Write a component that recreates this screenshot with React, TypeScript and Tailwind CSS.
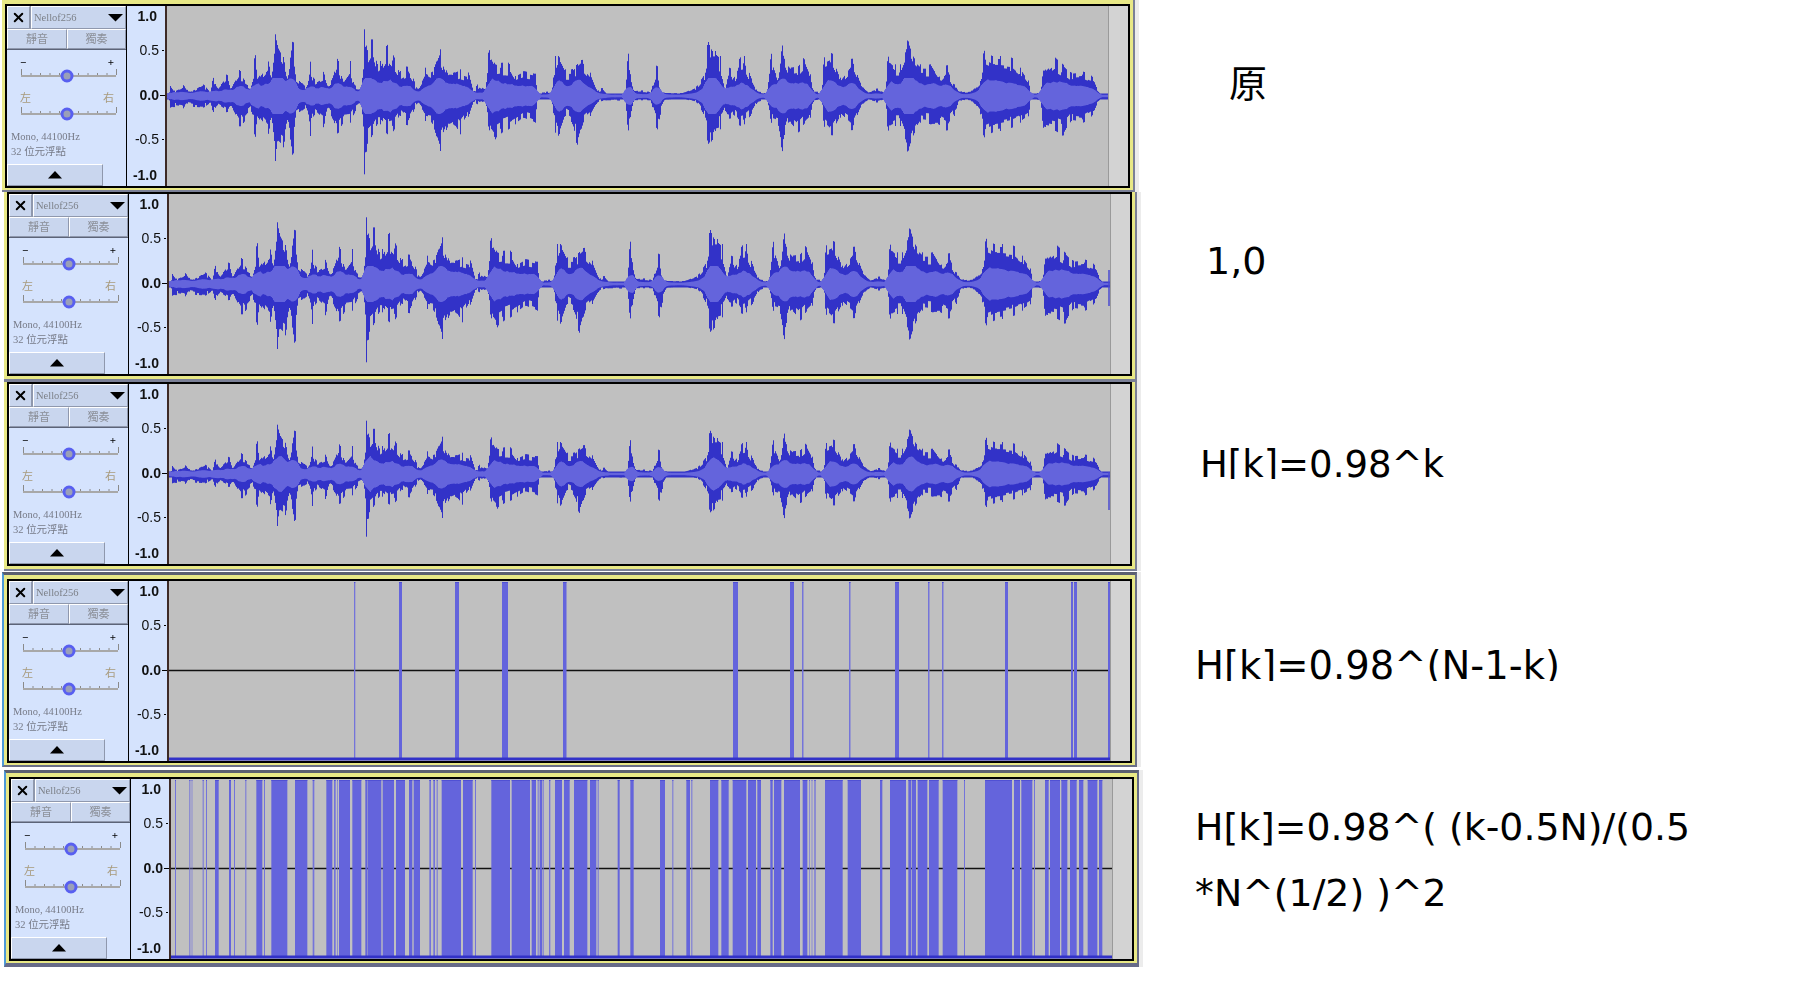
import type { ReactNode } from "react"
import { X } from "lucide-react"

// envelope read off the clip: [x in crop, top y, bottom y], crop centre line is y=285 at 3x
const leftPeaks = [
  [22,285,285],[30,255,320],[40,270,318],[70,252,322],[75,262,310],[100,268,318],[130,250,320],[150,275,305],[158,228,335],[170,262,312],
  [200,218,335],[210,262,315],[238,205,378],[250,235,365],[275,255,330],[284,148,420],[290,235,345],[325,180,400],[332,240,340],[345,100,480],
  [350,130,420],[370,170,440],[380,240,350],[398,108,475],[405,220,350],[440,260,320],[450,182,405],[460,235,340],[490,212,380],[500,255,320],
  [515,235,350],[532,170,400],[545,235,370],[570,180,365],[580,250,340],[605,255,310],[612,85,520],[620,150,430],[635,110,405],[650,190,370],
  [660,180,370],[680,130,400],[700,165,390],[720,210,345],[740,195,375],[760,235,330],[770,265,305],[795,200,360],[815,215,365],[840,145,450],
  [860,215,380],[880,215,370],[900,205,400],[925,215,345],[940,275,300],[950,250,310],[975,265,300],[985,143,385],[1005,190,415],[1025,185,395],
  [1045,185,385],[1065,225,370],[1090,210,350],[1125,218,365],[1130,275,298],[1160,272,295],[1175,270,300],[1185,165,395],[1195,165,405],[1215,205,345],
  [1235,205,365],[1250,190,435],[1265,175,375],[1290,215,345],[1310,270,305],[1325,260,300],[1340,280,298],[1395,278,300],[1403,148,395],[1412,240,335],
  [1420,270,298],[1445,268,298],[1465,272,298],
]
const rightPeaks = [
  [0,275,298],[20,185,390],[28,270,350],[40,275,298],[100,275,295],[140,255,305],[165,215,350],[172,118,430],[185,150,420],[195,150,390],
  [210,165,385],[225,265,330],[238,195,355],[250,235,340],[268,170,375],[282,165,370],[300,225,345],[320,270,305],[350,275,295],[362,155,365],
  [385,235,375],[395,130,455],[415,200,360],[445,195,395],[460,170,370],[480,220,350],[490,272,298],[515,272,295],[520,170,375],[545,155,405],
  [570,230,350],[605,170,390],[630,245,320],[650,272,298],[680,262,305],[705,275,295],[712,165,390],[735,190,375],[750,190,375],[772,115,455],
  [790,170,400],[810,190,365],[840,190,370],[865,230,370],[890,190,390],[912,250,345],[925,272,298],[970,265,305],[990,240,340],[1000,148,410],
  [1025,165,395],[1050,165,390],[1085,170,380],[1110,200,365],[1135,240,345],[1140,275,298],[1170,275,298],[1178,210,380],[1215,170,390],[1238,190,405],
  [1262,215,360],[1300,212,365],[1325,225,345],[1345,275,298],[1375,282,290],
]

const peaks = [
  ...leftPeaks.map(([x, t, b]) => [x / 3 - 7, (285 - t) / 3, (b - 285) / 3]),
  ...rightPeaks.map(([x, t, b]) => [x / 3 + 483, (285 - t) / 3, (b - 285) / 3]),
]

const jitter = (i: number) => {
  const v = Math.sin(i * 12.9898) * 43758.5453
  return v - Math.floor(v)
}

function envelope() {
  const out: number[][] = []
  let k = 0
  for (let x = 0; x < 941; x++) {
    while (k < peaks.length - 2 && peaks[k + 1][0] <= x) k++
    const [x0, u0, d0] = peaks[k]
    const [x1, u1, d1] = peaks[k + 1]
    const t = Math.min(1, Math.max(0, (x - x0) / (x1 - x0 || 1)))
    // steps a few pixels wide, the clip is blocky rather than fuzzy
    const f = 0.6 + 0.4 * jitter(Math.floor(x / 3))
    const near = Math.abs(x - x0) < 1 || Math.abs(x - x1) < 1 ? 1 : f
    out.push([(u0 + (u1 - u0) * t) * near, (d0 + (d1 - d0) * t) * near])
  }
  return out
}

const env = envelope()

function wavePaths(scale: number) {
  let dark = ""
  let light = ""
  env.forEach(([u, d], x) => {
    const c = 90
    dark += `M${x + 0.5} ${(c - Math.max(u * scale, 2.5)).toFixed(1)}V${(c + Math.max(d * scale, 3.5)).toFixed(1)}`
    let sum = 0
    let n = 0
    for (let j = Math.max(0, x - 4); j <= Math.min(940, x + 4); j++) {
      sum += env[j][0] + env[j][1]
      n++
    }
    const r = Math.max(1.2, Math.min(18, (sum / n) * 0.24 * scale))
    light += `M${x + 0.5} ${(c - r).toFixed(1)}V${(c + r).toFixed(1)}`
  })
  return { dark, light }
}

function Wave({ scale, tail }: { scale: number; tail?: [number, number] }) {
  const { dark, light } = wavePaths(scale)
  return (
    <svg width="941" height="180" className="block">
      <path d={dark} stroke="#3232c8" fill="none" />
      <path d={light} stroke="#6464dc" fill="none" />
      {tail && <line x1="940" x2="940" y1={tail[0]} y2={tail[1]} stroke="#4a4ad0" strokeWidth="1.5" />}
    </svg>
  )
}

const sparse: [number, number][] = [
  [185, 1.3], [230, 3], [286, 4], [333, 6], [394, 3.5], [564, 5], [621, 4], [633, 1.5], [680, 1.5], [726, 4], [759, 1.5], [773, 1.5], [836, 3], [902, 2], [905, 3], [939, 2],
]

const denseLeft = [
  [45,48],[88,91],[95,97],[128,131],[138,141],[165,176],[207,213],[222,225],[256,259],[289,307],[312,315],[334,382],[405,442],[458,463],[499,517],[522,527],[531,533],[537,570],[577,604],[616,622],[623,664],[668,702],[708,735],[747,757],[761,780],[808,813],[820,825],[830,833],[845,903],[909,938],[945,948],[994,1050],[1055,1110],[1115,1128],[1133,1136],[1139,1147],[1150,1152],[1167,1171],[1185,1206],[1212,1229],[1242,1282],[1290,1309],[1313,1316],[1373,1379],[1411,1421],
]
const denseRight = [
  [30,45],[67,70],[109,120],[124,127],[180,205],[214,236],[248,289],[294,318],[322,333],[361,368],[372,394],[402,450],[458,472],[478,480],[485,487],[493,497],[525,578],[593,633],[690,697],[720,768],[775,783],[785,798],[803,832],[837,866],[878,922],[942,945],[1005,1086],[1092,1110],[1114,1147],[1152,1155],[1185,1196],[1200,1230],[1234,1252],[1260,1280],[1287,1300],[1313,1342],[1347,1357],
]
const dense: [number, number][] = [
  ...denseLeft.map(([a, b]) => [a / 3 - 11, (b - a) / 3] as [number, number]),
  ...denseRight.map(([a, b]) => [a / 3 + 479, (b - a) / 3] as [number, number]),
]

function Bars({ bars }: { bars: [number, number][] }) {
  return (
    <svg width="941" height="180" className="block">
      <line x1="0" x2="941" y1="89.5" y2="89.5" stroke="#111" strokeWidth="1.5" />
      {bars.map(([x, w], i) => (
        <g key={i}>
          <rect x={x} y="1" width={w} height="176" fill={w < 2 ? "#7474da" : "#6464dc"} />
          <rect x={x} y="1" width={w} height="1" fill="#5050d4" />
        </g>
      ))}
      <rect x="0" y="176.5" width="941" height="3" fill="#3232c8" />
    </svg>
  )
}

function Slider({ left, right, accent }: { left: string; right: string; accent?: boolean }) {
  return (
    <div>
      <div className={`flex justify-between pl-[13px] pr-[12px] h-[12px] text-[11px] ${accent ? "leading-[10px] text-[#a89a7c]" : "leading-[14px] text-black font-bold"}`}>
        <span>{left}</span>
        <span>{right}</span>
      </div>
      <svg width="119" height="17" className="block">
        <path d="M14.5 2V8M24 6V8M33.5 6V8M43 6V8M52.5 6V8M62 6V8M71.5 6V8M81 6V8M90.5 6V8M100 6V8M109.5 2V8" stroke="#8a8a8a" />
        <line x1="14" x2="109" y1="9" y2="9" stroke="#a8a8a8" strokeWidth="2" />
        <circle cx="60" cy="9" r="5" fill="#9a9fb8" stroke="#585ff0" strokeWidth="3" />
      </svg>
    </div>
  )
}

function Panel() {
  const btn = "flex items-center bg-[#c9d6ee] border-t border-l border-t-white border-l-white border-r border-b border-r-[#8f98ad] border-b-[#8f98ad]"
  return (
    <div className="w-[119px] h-[180px] shrink-0 bg-[#d5e3fd] flex flex-col font-['Liberation_Serif','Noto_Sans_CJK_TC',serif]">
      <div className="flex h-[23px] gap-[1px] bg-[#8f98ad]">
        <div className={`${btn} w-[23px] justify-center`}>
          <X size={15} strokeWidth={3.2} className="text-black" />
        </div>
        <div className={`${btn} flex-1 pl-[2px] justify-between pr-[2px] text-[10.5px] text-[#7c8088]`}>
          <span>Nellof256</span>
          <svg width="15" height="8"><polygon points="0,0 15,0 7.5,7.5" fill="#000" /></svg>
        </div>
      </div>
      <div className="flex h-[21px] border-b border-[#5c6478] text-[11px] text-[#8b8f98]">
        <div className={`${btn} w-[60px] justify-center`}>靜音</div>
        <div className={`${btn} flex-1 justify-center`}>獨奏</div>
      </div>
      <div className="mt-[5px]">
        <Slider left="−" right="+" />
      </div>
      <div className="mt-[9px]">
        <Slider left="左" right="右" accent />
      </div>
      <div className="mt-[7px] pl-[4px] text-[10.5px] leading-[15px] text-[#777b88]">
        <div>Mono, 44100Hz</div>
        <div>32 位元浮點</div>
      </div>
      <div className={`${btn} w-[96px] h-[22px] mt-auto justify-center`}>
        <svg width="14" height="8"><polygon points="7,0 14,7.5 0,7.5" fill="#000" /></svg>
      </div>
    </div>
  )
}

function Ruler() {
  const line = "flex items-center h-[18px]"
  return (
    <div className="w-[39px] shrink-0 h-[180px] bg-[#d5e3fd] border-l border-black flex flex-col items-end font-['Liberation_Sans',sans-serif] text-[14px] text-[#111]">
      <div className={`${line} mt-[1px] mr-[8px] font-bold`}>1.0</div>
      <div className={`${line} mt-[16px] mr-[1px]`}>0.5<span className="ml-[3px] w-[2px] h-[1px] bg-black" /></div>
      <div className={`${line} mt-[27px] font-bold`}>0.0<span className="ml-[1px] w-[5px] h-[1px] bg-black" /></div>
      <div className={`${line} mt-[26px] mr-[1px]`}>-0.5<span className="ml-[3px] w-[2px] h-[1px] bg-black" /></div>
      <div className={`${line} mt-[18px] mr-[8px] font-bold`}>-1.0</div>
    </div>
  )
}

function Track({ frame, children }: { frame: string; children: ReactNode }) {
  return (
    <div className={`shrink-0 bg-[#e8e886] shadow-[4px_0_0_#ececec] ${frame}`}>
      <div className="border-2 border-black flex w-[1125px] h-[184px] blur-[0.3px]">
        <Panel />
        <Ruler />
        <div className="w-[2px] shrink-0 bg-[#3d2a26]" />
        <div className="w-[941px] h-[180px] shrink-0 bg-[#c0c0c0]">{children}</div>
        <div className="flex-1 bg-[#d3d3d3] border-l border-[#9a9a9a]" />
      </div>
    </div>
  )
}

const label = "font-['DejaVu_Sans','Noto_Sans_CJK_TC',sans-serif] text-black whitespace-pre"

export default function App() {
  return (
    <div className="w-[1801px] h-[981px] bg-white overflow-hidden">
      <div className="flex items-start h-[192px]">
        <Track frame="ml-[2px] pt-[4px] px-[3px] pb-[2px] border-b-2 border-r-2 border-[#7b8096]">
          <Wave scale={1} />
        </Track>
        <div className={`${label} ml-[94px] mt-[65px] text-[38px] leading-none`}>原</div>
      </div>
      <div className="flex items-start h-[189px]">
        <Track frame="ml-[4px] px-[3px] pb-[3px] border-b-[3px] border-r-2 border-[#7b8096]">
          <Wave scale={1} tail={[76, 112]} />
        </Track>
        <div className={`${label} ml-[69px] mt-[50px] text-[38px] leading-none`}>1,0</div>
      </div>
      <div className="flex items-start h-[190px]">
        <Track frame="ml-[4px] px-[3px] pb-[3px] border-t border-b-2 border-r-2 border-[#7b8096]">
          <Wave scale={0.8} tail={[88, 126]} />
        </Track>
        <div className={`${label} ml-[63px] mt-[65px] text-[37px] leading-none h-[33px] overflow-hidden`}>H[k]=0.98^k</div>
      </div>
      <div className="flex items-start h-[196px] pt-[1px]">
        <Track frame="ml-[2px] pt-[4px] px-[3px] pb-[2px] border-l-2 border-l-[#4d9ad8] border-t-[3px] border-t-[#5b5f70] border-b-2 border-r-2 border-b-[#6b7088] border-r-[#6b7088]">
          <Bars bars={sparse} />
        </Track>
        <div className={`${label} ml-[58px] mt-[75px] text-[38.5px] leading-none h-[34px] overflow-hidden`}>H[k]=0.98^(N-1-k)</div>
      </div>
      <div className="flex items-start pt-[3px]">
        <Track frame="ml-[4px] pt-[4px] px-[3px] pb-[2px] border-l-2 border-l-[#4d9ad8] border-t-[3px] border-t-[#5b5f70] border-b-4 border-r-2 border-b-[#666a88] border-r-[#666a88]">
          <Bars bars={dense} />
        </Track>
        <div className={`${label} ml-[56px] mt-[24px] text-[37.8px] leading-[66px]`}>
          <div>H[k]=0.98^( (k-0.5N)/(0.5</div>
          <div>*N^(1/2) )^2</div>
        </div>
      </div>
    </div>
  )
}
